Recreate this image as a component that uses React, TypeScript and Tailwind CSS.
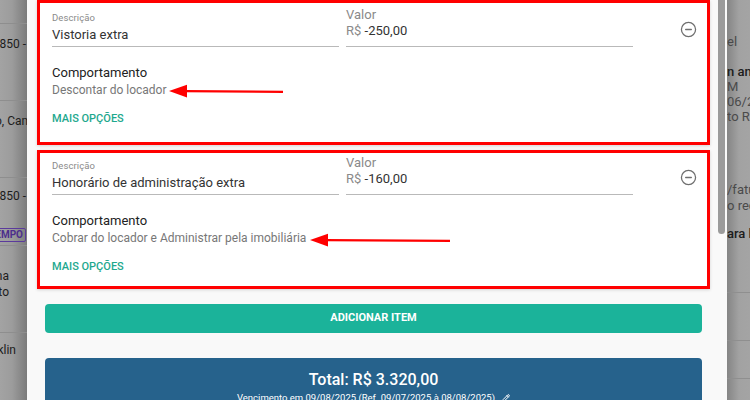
import { CircleMinus, Pencil } from 'lucide-react'
import clsx from 'clsx'

type Item = { desc: string; value: string; behavior: string }

const items: Item[] = [
  { desc: 'Vistoria extra', value: '-250,00', behavior: 'Descontar do locador' },
  { desc: 'Honorário de administração extra', value: '-160,00', behavior: 'Cobrar do locador e Administrar pela imobiliária' },
]

/** Red annotation arrow pointing left, drawn over the card. */
function Arrow({ className, width }: { className: string; width: number }) {
  return (
    <svg className={clsx('pointer-events-none absolute', className)} width={width} height={16} viewBox={`0 0 ${width} 16`} aria-hidden>
      <line x1={17} y1={8.2} x2={width - 1} y2={8.8} stroke="#ff0000" strokeWidth={2.2} />
      <polygon points="1,8 19,1.8 19,14.4" fill="#ff0000" />
    </svg>
  )
}

function ItemCard({ item, first }: { item: Item; first?: boolean }) {
  return (
    <div
      className={clsx(
        'relative border-[3px] border-[#ff0000] bg-white pl-[12px] pr-[10px] shadow-[0_1px_3px_rgba(0,0,0,0.15)]',
        first ? 'pt-[4px] pb-[15px]' : 'mt-[5px] pt-[2px] pb-[11px]',
      )}
    >
      <div className="flex">
        <div className="flex items-end gap-[7px]">
          <div className="w-[287px] border-b border-[#b9b9b9] pb-[3px]">
            <div className="text-[9.5px] leading-[12px] tracking-[0.1px] text-[#8a8a8a]">Descrição</div>
            <div className="mt-[3px] text-[13px] leading-[16px] text-[#333]">{item.desc}</div>
          </div>
          <div className="w-[287px] border-b border-[#b9b9b9] pb-[7px]">
            <div className="text-[13px] leading-[16px] text-[#8a8a8a]">Valor</div>
            <div className="text-[13px] leading-[16px] text-[#333]">
              <span className="text-[#8a8a8a]">R$</span> {item.value}
            </div>
          </div>
        </div>
        <CircleMinus className="ml-auto mt-[14px] h-[17px] w-[17px] text-[#6f6f6f]" strokeWidth={1.8} />
      </div>
      <div className="mt-[18px] text-[13px] leading-[16px] text-[#222]">Comportamento</div>
      <div className="mt-[1px] text-[12px] leading-[16px] text-[#777]">{item.behavior}</div>
      <div className="mt-[13px] text-[11px] font-medium leading-[16px] text-[#1ea88e]">MAIS OPÇÕES</div>
      {first ? (
        <Arrow className="left-[128px] top-[80px]" width={116} />
      ) : (
        <Arrow className="left-[269px] top-[79px]" width={142} />
      )}
    </div>
  )
}

function LeftBackdrop() {
  return (
    <div className="flex w-[27px] shrink-0 flex-col overflow-hidden bg-[linear-gradient(to_right,#a3a3a3,#9c9c9c_45%,#7b7b7b)] text-[12px] leading-[16px] text-[#1c1c1c]">
      <div className="h-[24px] shrink-0 border-b border-[#8e8e8e]" />
      <div className="h-[77px] shrink-0 border-b border-[#8e8e8e] pt-[12px]">
        <div className="flex w-[26px] justify-end whitespace-nowrap">1850 -</div>
      </div>
      <div className="h-[77px] shrink-0 border-b border-[#8e8e8e] pt-[12px]">
        <div className="-ml-[5px] whitespace-nowrap">o, Campinas</div>
      </div>
      <div className="h-[68px] shrink-0 border-b border-[#8e8e8e] pt-[10px]">
        <div className="flex w-[26px] justify-end whitespace-nowrap">1850 -</div>
        <div className="mt-[24px] flex w-[26px] justify-end">
          <span className="whitespace-nowrap rounded-[2px] border border-[#5b3a9c] px-[2px] text-[10px] font-bold leading-[12px] text-[#4d2f8c]">TEMPO</span>
        </div>
      </div>
      <div className="h-[87px] shrink-0 border-b border-[#8e8e8e] pt-[22px]">
        <div className="flex w-[9px] justify-end whitespace-nowrap">Joana</div>
        <div className="flex w-[9px] justify-end whitespace-nowrap">Sito</div>
      </div>
      <div className="pt-[9px]">
        <div className="flex w-[16px] justify-end whitespace-nowrap">Franklin</div>
      </div>
    </div>
  )
}

function RightBackdrop() {
  return (
    <div className="flex flex-1 flex-col overflow-hidden bg-[linear-gradient(to_right,#858585,#a2a2a2_12px,#a4a4a4)] text-[13px] leading-[15px] text-[#4a4a4a]">
      <div className="mt-[34px] whitespace-nowrap">el</div>
      <div className="mt-[15px] whitespace-nowrap font-medium text-[#1c1c1c]">n andamento</div>
      <div className="whitespace-nowrap">M</div>
      <div className="whitespace-nowrap">06/2025</div>
      <div className="whitespace-nowrap">to R$</div>
      <div className="mt-[58px] whitespace-nowrap">/fatura</div>
      <div className="mt-[1px] whitespace-nowrap">o recebido</div>
      <div className="mt-[13px] whitespace-nowrap font-medium text-[#1c1c1c]">ara locação</div>
      <div className="mt-[51px] h-[48px] shrink-0 border-t border-[#8f8f8f]" />
      <div className="h-[38px] shrink-0 border-t border-[#8f8f8f]" />
      <div className="border-t border-[#8f8f8f]" />
    </div>
  )
}

export default function App() {
  return (
    <div className="flex h-[400px] w-[750px] overflow-hidden bg-[#9f9f9f] font-['Roboto',sans-serif]">
      <LeftBackdrop />
      <div className="flex w-[700px] shrink-0 bg-[#f9f9f9]">
        <div className="ml-[10px] flex w-[673px] shrink-0 flex-col">
          {items.map((item, i) => (
            <ItemCard key={item.desc} item={item} first={i === 0} />
          ))}
          <button
            type="button"
            className="mx-[8px] mt-[15px] flex h-[29px] shrink-0 items-center justify-center rounded-[4px] bg-[#1bb39a] text-[11px] font-bold text-white"
          >
            ADICIONAR ITEM
          </button>
          <div className="mx-[8px] mt-[25px] flex-1 rounded-t-[4px] bg-[#26628c] pt-[12px] text-center text-white">
            <div className="text-[16px] font-medium leading-[20px]">Total: R$ 3.320,00</div>
            <div className="mt-[1px] flex items-center justify-center gap-[7px] text-[9.5px] leading-[13px]">
              Vencimento em 09/08/2025 (Ref. 09/07/2025 à 08/08/2025)
              <Pencil className="h-[8px] w-[8px]" strokeWidth={3} />
            </div>
          </div>
        </div>
        <div className="ml-[8px] w-[7px] shrink-0">
          <div className="h-[234px] rounded-b-[4px] bg-[#9b9b9b]" />
        </div>
      </div>
      <RightBackdrop />
    </div>
  )
}
